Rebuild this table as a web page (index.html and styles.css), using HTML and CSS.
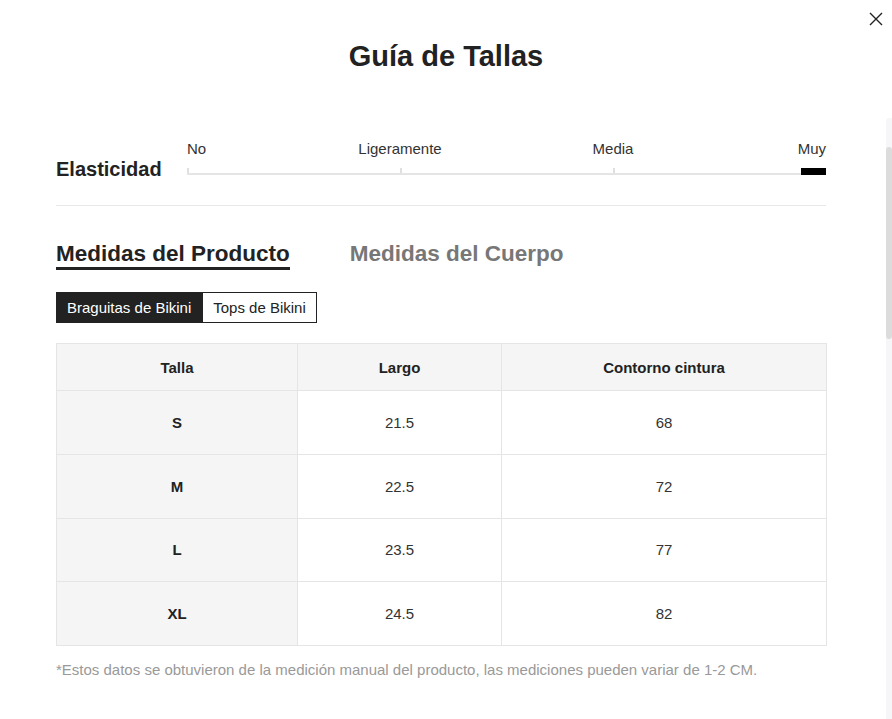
FILE: index.html
```html
<!DOCTYPE html>
<html lang="es">
<head>
<meta charset="UTF-8">
<meta name="viewport" content="width=device-width, initial-scale=1.0">
<title>Guía de Tallas</title>
<link rel="stylesheet" href="styles.css">
</head>
<body>

<div class="modal">
  <button class="close" aria-label="Cerrar">
    <svg width="14" height="14" viewBox="0 0 14 14"><path d="M1 1L13 13M13 1L1 13" stroke="#222" stroke-width="1.4" fill="none"/></svg>
  </button>
  <div class="scrollbar"><div class="thumb"></div></div>

  <h2 class="title">Guía de Tallas</h2>

  <div class="elastic">
    <div class="elastic-name">Elasticidad</div>
    <div class="scale">
      <div class="scale-labels">
        <span class="lbl-start">No</span>
        <span class="lbl-mid">Ligeramente</span>
        <span class="lbl-mid">Media</span>
        <span class="lbl-end">Muy</span>
      </div>
      <div class="track">
        <div class="seg"><i class="tick"></i></div>
        <div class="seg"><i class="tick"></i></div>
        <div class="seg"><i class="tick"></i><i class="mark"></i></div>
      </div>
    </div>
  </div>

  <div class="tabs">
    <div class="tab active">Medidas del Producto</div>
    <div class="tab">Medidas del Cuerpo</div>
  </div>

  <div class="subtabs">
    <div class="subtab active">Braguitas de Bikini</div>
    <div class="subtab">Tops de Bikini</div>
  </div>

  <table class="sizes">
    <colgroup>
      <col class="c1"><col class="c2"><col class="c3">
    </colgroup>
    <thead>
      <tr><th>Talla</th><th>Largo</th><th>Contorno cintura</th></tr>
    </thead>
    <tbody>
      <tr><td>S</td><td>21.5</td><td>68</td></tr>
      <tr><td>M</td><td>22.5</td><td>72</td></tr>
      <tr><td>L</td><td>23.5</td><td>77</td></tr>
      <tr><td>XL</td><td>24.5</td><td>82</td></tr>
    </tbody>
  </table>

  <p class="note">*Estos datos se obtuvieron de la medición manual del producto, las mediciones pueden variar de 1-2 CM.</p>
</div>

</body>
</html>
```

FILE: styles.css
```css
html, body {
  margin: 0;
  padding: 0;
  background: #fff;
}

body {
  font-family: "Liberation Sans", Arial, sans-serif;
  color: #222;
  overflow: hidden;
}

.modal {
  position: relative;
  width: 892px;
  height: 719px;
  box-sizing: border-box;
  padding: 40px 66px 0 56px;
}

.close {
  position: absolute;
  top: 11px;
  right: 8px;
  width: 16px;
  height: 16px;
  padding: 0;
  border: 0;
  background: none;
  display: flex;
  align-items: center;
  justify-content: center;
  cursor: pointer;
}

.scrollbar {
  position: absolute;
  top: 118px;
  right: 0;
  bottom: 0;
  width: 6px;
  background: #f6f6f8;
  border-radius: 3px 0 0 0;
}

.scrollbar .thumb {
  margin-top: 29px;
  height: 192px;
  width: 6px;
  background: #dcdcdc;
  border-radius: 3px;
}

/* title is centred on the whole dialog, not on the padded body */
.title {
  margin: 0 -66px 0 -56px;
  text-align: center;
  font-size: 29px;
  line-height: 32px;
  font-weight: bold;
}

.elastic {
  display: flex;
  align-items: flex-end;
  margin-top: 69px;
}

.elastic-name {
  width: 131px;
  flex-shrink: 0;
  font-size: 20px;
  font-weight: bold;
  line-height: 24px;
  margin-bottom: -6px;
}

.scale {
  flex: 1;
}

.scale-labels {
  display: grid;
  grid-template-columns: repeat(6, 1fr);
  font-size: 15px;
  line-height: 16px;
  color: #333;
}

.lbl-start { grid-column: 1; text-align: left; }
.lbl-mid { grid-column: span 2; text-align: center; }
.lbl-end { grid-column: 6; text-align: right; }

.track {
  display: grid;
  grid-template-columns: repeat(3, 1fr);
  height: 7px;
  margin-top: 11px;
  background: linear-gradient(#e5e5e5, #e5e5e5) left 5px / 100% 2px no-repeat;
}

.seg {
  display: flex;
  justify-content: space-between;
  align-items: flex-start;
}

.tick {
  width: 2px;
  height: 5px;
  background: #e0e0e0;
}

.mark {
  width: 25px;
  height: 7px;
  background: #000;
}

.tabs {
  display: flex;
  gap: 60px;
  margin-top: 30px;
  padding-top: 35px;
  border-top: 1px solid #e8e8e8;
}

.tab {
  font-size: 22.5px;
  font-weight: bold;
  line-height: 26px;
  color: #777;
  border-bottom: 3px solid transparent;
}

.tab.active {
  color: #222;
  border-bottom-color: #222;
}

.subtabs {
  display: flex;
  margin-top: 22px;
}

.subtab {
  font-size: 15px;
  line-height: 29px;
  padding: 0 10px;
  border: 1px solid #222;
  background: #fff;
  color: #222;
}

.subtab.active {
  background: #222;
  color: #fff;
}

.sizes {
  width: 770px;
  margin-top: 20px;
  border-collapse: collapse;
  table-layout: fixed;
  font-size: 15px;
}

.sizes .c1 { width: 241px; }
.sizes .c2 { width: 204px; }
.sizes .c3 { width: 325px; }

.sizes th,
.sizes td {
  border: 1px solid #e5e5e5;
  text-align: center;
  padding: 0;
}

.sizes th {
  height: 46px;
  background: #f5f5f5;
  font-weight: bold;
}

.sizes td {
  height: 62.75px;
  color: #333;
}

.sizes td:first-child {
  background: #f5f5f5;
  font-weight: bold;
  color: #222;
}

.note {
  margin: 15px 0 0;
  font-size: 15px;
  line-height: 17px;
  color: #999;
}
```
